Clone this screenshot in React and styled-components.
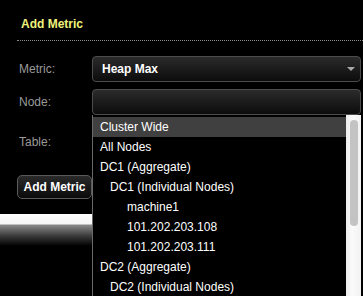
import React from "react";
import styled, { createGlobalStyle } from "styled-components";

const Global = createGlobalStyle`
  html, body { margin: 0; padding: 0; background: #000; }
  body { font-family: "Liberation Sans", Arial, sans-serif; }
`;

const Page = styled.div`
  width: 363px;
  height: 296px;
  background: #000;
  overflow: hidden;
  position: relative;
`;

const Header = styled.div`
  margin-left: 17px;
  height: 41px;
  box-sizing: border-box;
  padding: 17px 0 0 4px;
  border-bottom: 1px dotted #8a8a8a;
`;

const Title = styled.h2`
  margin: 0;
  font-size: 12px;
  line-height: 15px;
  font-weight: bold;
  color: #eef27c;
`;

const Form = styled.div`
  margin: 15px 2px 0 17px;
  display: grid;
  grid-template-columns: 75px 1fr;
  grid-auto-rows: 26px;
  row-gap: 7px;
`;

const Label = styled.label`
  padding-left: 2px;
  align-self: center;
  font-size: 12px;
  color: #9a9a9a;
  margin-top: ${(p) => p.$shift || 0}px;
`;

const Field = styled.div`
  position: relative;
  box-sizing: border-box;
  border: 1px solid #4c4c4c;
  border-radius: 4px;
  background: linear-gradient(#2b2b2b, #0c0c0c);
  display: flex;
  align-items: center;
  padding: 0 5px 0 9px;
  font-size: 12px;
  font-weight: bold;
  color: #fff;
`;

const Arrow = styled.span`
  margin-left: auto;
  width: 0;
  height: 0;
  border-left: 4px solid transparent;
  border-right: 4px solid transparent;
  border-top: 4px solid #a8a8a8;
`;

const Empty = styled.div``;

const ButtonRow = styled.div`
  margin: 27px 0 0 17px;
`;

const Button = styled.button`
  width: 75px;
  height: 24px;
  box-sizing: border-box;
  border: 1px solid #5a5a5a;
  border-radius: 5px;
  background: linear-gradient(#2a2a2a, #0a0a0a);
  color: #fff;
  font-family: "Liberation Sans", Arial, sans-serif;
  font-size: 12px;
  font-weight: bold;
  padding: 0;
  display: block;
`;

const Shine = styled.div`
  margin-top: 15px;
  width: 92px;
  height: 32px;
  background: linear-gradient(#fff 0, #f6f6f6 10px, #8a8a8a 11px, #3a3a3a 22px, #000 32px);
`;

const Menu = styled.div`
  position: absolute;
  left: -1px;
  top: 25px;
  right: -1px;
  height: 200px;
  background: #000;
  border-left: 1px solid #6a6a6a;
  display: flex;
  z-index: 2;
`;

const Options = styled.ul`
  list-style: none;
  margin: 0;
  padding: 2px 0 0;
  flex: 1;
`;

const Option = styled.li`
  height: 20px;
  line-height: 20px;
  padding-left: ${(p) => 7 + p.$level * 10 + (p.$level > 1 ? 7 : 0)}px;
  font-size: 12px;
  font-weight: normal;
  color: #fff;
  background: ${(p) => (p.$active ? "#404040" : "transparent")};
  white-space: nowrap;
`;

const Track = styled.div`
  width: 15px;
  background: linear-gradient(90deg, #ececec, #fafafa 40%, #f2f2f2);
  padding: 5px 3px 0 4px;
  box-sizing: border-box;
`;

const Thumb = styled.div`
  width: 8px;
  height: 106px;
  border-radius: 4px;
  background: #c3c3c3;
`;

const nodes = [
  { label: "Cluster Wide", level: 0, active: true },
  { label: "All Nodes", level: 0 },
  { label: "DC1 (Aggregate)", level: 0 },
  { label: "DC1 (Individual Nodes)", level: 1 },
  { label: "machine1", level: 2 },
  { label: "101.202.203.108", level: 2 },
  { label: "101.202.203.111", level: 2 },
  { label: "DC2 (Aggregate)", level: 0 },
  { label: "DC2 (Individual Nodes)", level: 1 },
];

export default function App() {
  return (
    <Page>
      <Global />
      <Header>
        <Title>Add Metric</Title>
      </Header>
      <Form>
        <Label>Metric:</Label>
        <Field>
          Heap Max
          <Arrow />
        </Field>
        <Label>Node:</Label>
        <Field>
          <Menu>
            <Options>
              {nodes.map((n) => (
                <Option key={n.label} $level={n.level} $active={n.active}>
                  {n.label}
                </Option>
              ))}
            </Options>
            <Track>
              <Thumb />
            </Track>
          </Menu>
        </Field>
        <Label $shift={14}>Table:</Label>
        <Empty />
      </Form>
      <ButtonRow>
        <Button>Add Metric</Button>
      </ButtonRow>
      <Shine />
    </Page>
  );
}
